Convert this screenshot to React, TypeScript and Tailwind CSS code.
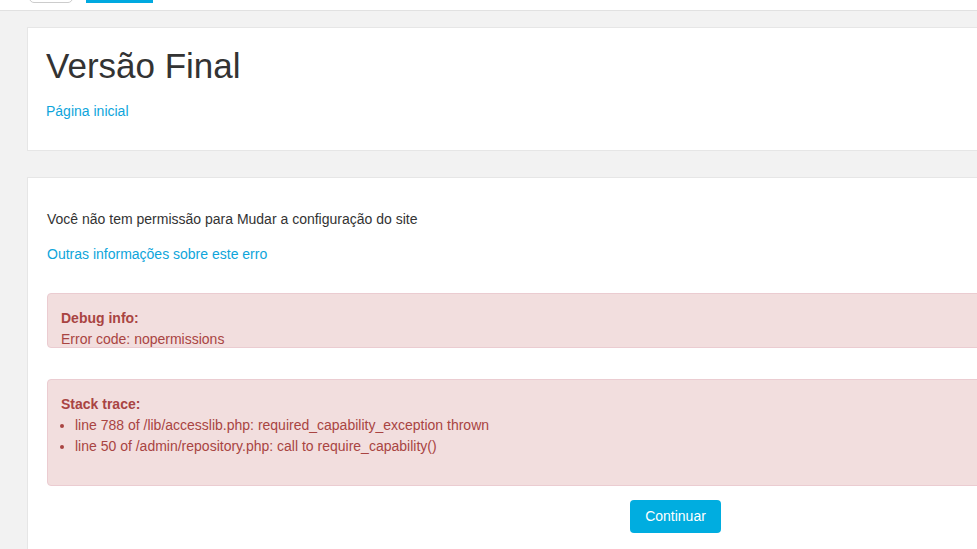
import React from "react";

export default function App() {
  return (
    <div className="w-[977px] h-[549px] overflow-hidden bg-[#f2f2f2] text-[#333333] font-['Liberation_Sans',Arial,sans-serif]">
      <header className="h-[11px] bg-white border-b border-[#e1e1e1] flex items-start overflow-hidden">
        <div className="ml-[29px] -mt-[18px] w-[44px] h-[21px] border border-[#cccccc] rounded-[5px] bg-white" />
        <div className="ml-[13px] w-[67px] h-[3px] bg-[#00a9e0]" />
      </header>
      <main className="pl-[27px] pt-[16px] w-[1200px]">
        <section className="bg-white border border-[#e6e6e6] h-[124px] px-[18px] pt-[17px]">
          <h1 className="text-[35px] leading-[42px] text-[#333333]">Versão Final</h1>
          <div className="mt-[12px]">
            <a className="text-[14px] leading-[20px] text-[#0ea5db]">Página inicial</a>
          </div>
        </section>
        <section className="mt-[26px] bg-white border border-[#e6e6e6] h-[400px] pl-[19px] pt-[31px] w-[1200px]">
          <p className="text-[14px] leading-[20px] text-[#333333]">
            Você não tem permissão para Mudar a configuração do site
          </p>
          <p className="mt-[15px] text-[14px] leading-[20px] text-[#0ea5db]">
            Outras informações sobre este erro
          </p>
          <div className="mt-[29px] w-[1100px] bg-[#f2dede] border border-[#ebccd1] rounded-[4px] text-[#a94442] text-[14px] leading-[21px] pl-[13px] pt-[14px] h-[55px]">
            <div className="font-bold">Debug info:</div>
            <div>Error code: nopermissions</div>
          </div>
          <div className="mt-[31px] w-[1100px] bg-[#f2dede] border border-[#ebccd1] rounded-[4px] text-[#a94442] text-[14px] leading-[21px] pl-[13px] pt-[14px] h-[107px]">
            <div className="font-bold">Stack trace:</div>
            <ul className="list-disc pl-[14px]">
              <li>line 788 of /lib/accesslib.php: required_capability_exception thrown</li>
              <li>line 50 of /admin/repository.php: call to require_capability()</li>
            </ul>
          </div>
          <div className="mt-[14px] pl-[583px]">
            <button className="h-[33px] w-[91px] bg-[#00ade0] text-white rounded-[4px] text-[14px] font-['Liberation_Sans',Arial,sans-serif]">
              Continuar
            </button>
          </div>
        </section>
      </main>
    </div>
  );
}
